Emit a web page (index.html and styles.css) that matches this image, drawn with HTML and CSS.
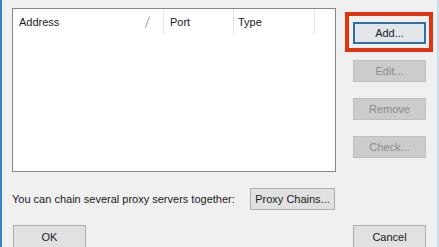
FILE: index.html
```html
<!DOCTYPE html>
<html>
<head>
  <title>Proxy Servers</title>
  <link rel="stylesheet" href="styles.css">
</head>
<body>
  <div class="dialog">
    <div class="top">
      <div class="list">
        <div class="header">
          <div class="col col-address">Address
            <svg class="sort" width="5" height="12" viewBox="0 0 5 12"><line x1="4.5" y1="0.5" x2="0.5" y2="11.5" stroke="#9a9a9a" stroke-width="1"/></svg>
          </div>
          <div class="col col-port">Port</div>
          <div class="col col-type">Type</div>
        </div>
      </div>
      <div class="side">
        <button class="btn focused">Add...</button>
        <button class="btn" disabled>Edit...</button>
        <button class="btn" disabled>Remove</button>
        <button class="btn" disabled>Check...</button>
      </div>
    </div>
    <div class="chain">
      <span class="label">You can chain several proxy servers together:</span>
      <button class="btn wide">Proxy Chains...</button>
    </div>
    <div class="bottom">
      <button class="btn">OK</button>
      <button class="btn">Cancel</button>
    </div>
  </div>
  <div class="highlight"></div>
</body>
</html>
```

FILE: styles.css
```css
body {
  margin: 0;
  background-color: #f0f0f0;
  font-family: "Liberation Sans", Arial, sans-serif;
  font-size: 11px;
  color: #1a1a1a;
  border-left: 2px solid #3b84c4;
  border-right: 2px solid #c9dbec;
  height: 247px;
  overflow: hidden;
  box-sizing: border-box;
}
.dialog {
  padding: 8px 0 0 10px;
}
.top {
  display: flex;
}
.list {
  width: 324px;
  height: 164px;
  box-sizing: border-box;
  border: 1px solid #828790;
  background-color: #fff;
}
.header {
  display: flex;
  height: 25px;
}
.col {
  display: flex;
  align-items: center;
  box-sizing: border-box;
  border-right: 1px solid #e5e5e5;
  padding-left: 6px;
}
.col-address {
  width: 151px;
}
.col-port {
  width: 70px;
}
.col-type {
  width: 81px;
  padding-left: 4px;
}
.sort {
  margin-left: auto;
  margin-right: 13px;
  margin-top: 1px;
}
.side {
  display: flex;
  flex-direction: column;
  margin-left: 17px;
  padding-top: 14px;
  gap: 16px;
}
.btn {
  width: 73px;
  height: 22px;
  box-sizing: border-box;
  border: 1px solid #adadad;
  background-color: #e1e1e1;
  font-family: "Liberation Sans", Arial, sans-serif;
  font-size: 11px;
  color: #1a1a1a;
  padding: 0;
  margin: 0;
}
.btn:disabled {
  background-color: #cccccc;
  border-color: #bfbfbf;
  color: #8a8a8a;
}
.btn.focused {
  border: 2px solid #2f6fa8;
  background-color: #e3e6e8;
}
.btn.wide {
  width: 85px;
}
.chain {
  display: flex;
  align-items: center;
  justify-content: space-between;
  width: 323px;
  margin-top: 16px;
}
.label {
  white-space: nowrap;
}
.bottom {
  display: flex;
  justify-content: space-between;
  width: 413px;
  margin-top: 15px;
  margin-left: 1px;
}
.bottom .btn {
  height: 24px;
}
.highlight {
  position: absolute;
  left: 345px;
  top: 12px;
  width: 88px;
  height: 40px;
  box-sizing: border-box;
  border: 4px solid #e3320f;
}
```
